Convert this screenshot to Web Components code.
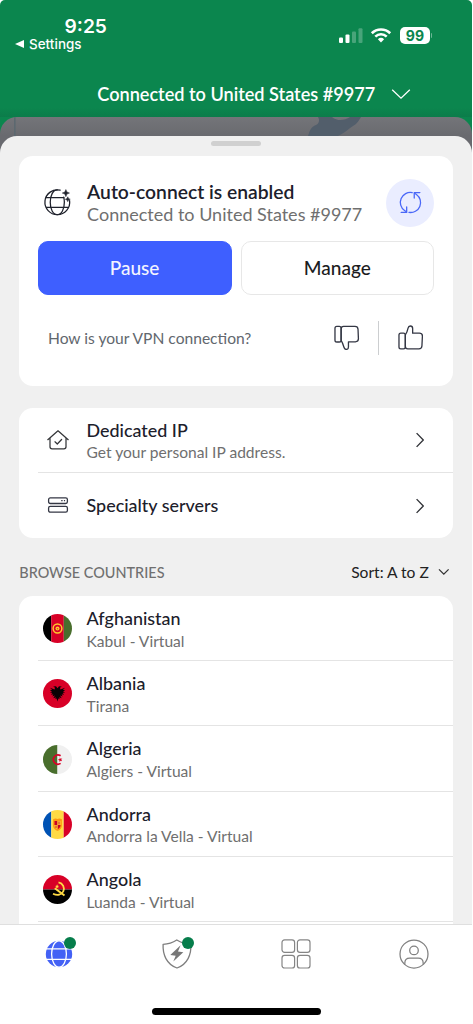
<!DOCTYPE html>
<html lang="en">
<head>
<meta charset="utf-8">
<title>VPN</title>
<style>
html,body{margin:0;height:100%;background:#fff;overflow:hidden}
body{font-family:Lato,"Open Sans",sans-serif;color:#1c1f2a}
</style>
</head>
<body>
<vpn-app></vpn-app>
<script>
const define = (name, html) => {
  const t = document.createElement('template');
  t.innerHTML = html;
  customElements.define(name, class extends HTMLElement {
    constructor() {
      super();
      this.attachShadow({mode: 'open'}).append(t.content.cloneNode(true));
    }
  });
};

const ICONS = {
  globeSpark: [30, 30, `<g fill="none" stroke="#1f222c" stroke-width="1.35" stroke-linecap="round"><path d="M18 2.3A13 13 0 1 0 27.9 13.2"/><path d="M15 2C10.4 2 7.6 8 7.6 15S10.4 28 15 28S22.4 22 22.4 15C22.4 13 22.2 11.3 21.8 9.7"/><path d="M3.5 10H21.8M3.5 20.3H26.5"/></g><path d="M24 1.6L25.1 4.2L27.8 5.3L25.1 6.4L24 9.1L22.9 6.4L20.2 5.3L22.9 4.2ZM26 9.2L26.8 11L28.6 11.8L26.8 12.6L26 14.4L25.2 12.6L23.4 11.8L25.2 11Z" fill="#1f222c" stroke="#1f222c" stroke-width=".5"/>`, 28.6],
  refresh: [24, 24, `<g fill="none" stroke="#4a68f8" stroke-width="1.35" stroke-linecap="round" stroke-linejoin="round"><path d="M13.8 1.7A10.4 10.4 0 0 0 5.8 20.4L7.6 21.7"/><path d="M10.4 22.3A10.4 10.4 0 0 0 18.2 3.6L16.4 2.3"/><path d="M21.8 1.6H15.9V7.3M2.3 22.4H8V16.7"/></g>`, 23],
  thumbUp: [26, 26, `<g fill="none" stroke="#343744" stroke-width="1.35" stroke-linejoin="round"><rect x="1" y="8.4" width="6.5" height="16" rx="1.9"/><path d="M7.5 10.2C8.8 8.3 9.8 5.4 10.3 3.1C10.6 1.7 11.2 1 12.6 1C14.2 1 15 2 15 3.6V8.4H21.9Q25 8.4 25 11.3L24.5 21.5Q24.3 24.4 21.4 24.4H10Q7.5 24.4 7.5 21.8Z"/></g>`, 25.4],
  thumbDown: [26, 26, `<g fill="none" stroke="#343744" stroke-width="1.35" stroke-linejoin="round"><rect x="1" y="1.4" width="6.3" height="16" rx="1.9"/><path d="M7.3 15.7C8.6 17.6 9.5 20.4 10.2 22.8C10.6 24.2 11.2 25 12.6 25C14.2 25 14.8 24 14.8 22.4V17.2H21.9Q25 17.2 25 14.2L24.6 4.3Q24.4 1.4 21.5 1.4H9.8Q7.3 1.4 7.3 4Z"/></g>`, 25.4],
  house: [24, 24, `<g fill="none" stroke="#343639" stroke-width="1.25" stroke-linecap="round" stroke-linejoin="round"><path d="M1.8 11.7L12 2.8L22.2 11.7M4 10V18.8Q4 20.9 6.1 20.9H17.9Q20 20.9 20 18.8V10"/><path d="M9 13.8L11.3 16L15.6 11.5"/></g>`],
  servers: [22, 18, `<g fill="none" stroke="#343744" stroke-width="1.3"><rect x="1.6" y="1.9" width="18.8" height="5.6" rx="1.7"/><rect x="1.6" y="10.4" width="18.8" height="5.8" rx="1.7"/><path d="M14.2 4.7H15.6M16.9 4.7H18.1"/></g>`],
  right: [10, 16, `<path d="M1.6 1.1L8.3 8L1.6 14.9" fill="none" stroke="#303237" stroke-width="1.35"/>`],
  down: [12, 8, `<path d="M1 1.4L5.8 6.1L10.6 1.4" fill="none" stroke="#333" stroke-width="1.3"/>`],
  downWide: [20, 12, `<path d="M1.2 1.7L10 10.1L18.8 1.7" fill="none" stroke="#fff" stroke-width="1.3"/>`],
  signal: [25, 17, `<g fill="#fff"><rect x="1" y="10.5" width="4" height="5.5" rx="1.1"/><rect x="7.5" y="7.5" width="4" height="8.5" rx="1.1"/><g opacity=".25"><rect x="14" y="4.5" width="4" height="11.5" rx="1.1"/><rect x="20.5" y="1.2" width="4" height="14.8" rx="1.1"/></g></g>`],
  wifi: [22, 16, `<g fill="none" stroke="#fff" stroke-width="2.6"><path d="M1.8 6.2A13.1 13.1 0 0 1 20.2 6.2"/><path d="M5.3 9.6A8.2 8.2 0 0 1 16.7 9.6"/></g><path d="M7.9 12.2A4.6 4.6 0 0 1 14.1 12.2L11 15.4Z" fill="#fff"/>`],
  globe: [28, 28, `<circle cx="14" cy="14" r="13.2" fill="#4361f5"/><g fill="none" stroke="#fff" stroke-width="1.3"><ellipse cx="14" cy="14" rx="7.4" ry="13.2"/><path d="M0 8.8H28M0 19.3H28"/></g>`],
  shield: [30, 30, `<path d="M14.8 1C11 3.6 6.3 5.2 1.1 5.3C.6 15.5 4.5 25.3 15 29C25.5 25.3 29.4 15.5 28.9 5.3C23.7 5.2 18.8 3.6 14.8 1Z" fill="none" stroke="#7e7e7e" stroke-width="1.3" stroke-linejoin="round"/><path d="M18.6 6.2L8.3 16L13.7 16.7L11.3 22.6L21.3 13.2L16 12.5Z" fill="#777"/>`],
  grid: [30, 30, `<g fill="none" stroke="#858585" stroke-width="1.2"><rect x="1" y=".8" width="12.6" height="12.6" rx="2.6"/><rect x="16.4" y=".8" width="12.6" height="12.6" rx="2.6"/><rect x="1" y="16.4" width="12.6" height="12.6" rx="2.6"/><rect x="16.4" y="16.4" width="12.6" height="12.6" rx="2.6"/></g>`],
  user: [30, 30, `<g fill="none" stroke="#808080" stroke-width="1.25"><circle cx="15" cy="15" r="14"/><circle cx="15" cy="11.4" r="4.3"/><path d="M5.8 25.4V24.2Q5.8 19.2 10.8 19.2H19.2Q24.2 19.2 24.2 24.2V25.4"/></g>`],
  af: [29, 29, `<path d="M0 0H8.2V29H0Z" fill="#000"/><path d="M8.2 0H20.8V29H8.2Z" fill="#d80027"/><path d="M20.8 0H29V29H20.8Z" fill="#496e2d"/><circle cx="14.5" cy="14.5" r="4.4" fill="none" stroke="#ffca2c" stroke-width="1.5"/><circle cx="14.5" cy="14.6" r="2" fill="#ffca2c"/><circle cx="14.5" cy="14.8" r=".8" fill="#d8501a"/>`],
  al: [29, 29, `<path d="M0 0H29V29H0Z" fill="#d80027"/><path d="M14.5 9.2L13 7.2L10.2 7.4L12 8.8L11.6 10.6L7 8.7L9.2 10.9L6.7 11L9 12.5L6.9 13.2L9.5 14.1L7.8 15.5L10.4 15.5L9.3 17.6L11.9 16.4L10.3 19.3L12.9 18.2L12.3 20.1L13.6 19.4L14.5 22.6L15.4 19.4L16.7 20.1L16.1 18.2L18.7 19.3L17.1 16.4L19.7 17.6L18.6 15.5L21.2 15.5L19.5 14.1L22.1 13.2L20 12.5L22.3 11L19.8 10.9L22 8.7L17.4 10.6L17 8.8L18.8 7.4L16 7.2Z" fill="#0b0205"/>`],
  dz: [29, 29, `<path d="M0 0H14.5V29H0Z" fill="#496e2d"/><path d="M14.5 0H29V29H14.5Z" fill="#f0f0f0"/><path d="M17.6 10.8A4.6 4.6 0 1 0 17.6 18.4" fill="none" stroke="#d80027" stroke-width="1.7"/><path d="M16.8 12.2L17.5 13.8L19.3 13.4L18.2 14.8L19.2 16.2L17.5 15.7L16.6 17.2L16.5 15.4L14.9 14.7L16.6 14.1Z" fill="#d80027"/>`],
  ad: [29, 29, `<path d="M0 0H8.3V29H0Z" fill="#0052b4"/><path d="M8.3 0H20.7V29H8.3Z" fill="#ffda44"/><path d="M20.7 0H29V29H20.7Z" fill="#d80027"/><path d="M10.1 9.3Q12.6 7.8 14.5 9Q16.4 7.8 18.9 9.3V15.8Q18.9 19 14.5 21Q10.1 19 10.1 15.8Z" fill="#ff9811"/><path d="M11.5 11H14.5V15H11.5ZM14.5 15H17.5Q17.5 18 14.5 19.2Z" fill="#c60024"/><path d="M14.5 11H17.5V15H14.5ZM11.5 15H14.5V19.2Q11.5 18 11.5 15Z" fill="#ffc63a"/><path d="M16 11.5V14.5M13 15.5V18" stroke="#c60024" stroke-width=".8"/>`],
  ao: [29, 29, `<path d="M0 0H29V14.5H0Z" fill="#d80027"/><path d="M0 14.5H29V29H0Z" fill="#000"/><path d="M15.5 7.4C20 8.3 22 12.8 20.2 16.5C18.7 19.8 14.5 20.8 10 18.7" fill="none" stroke="#ffda44" stroke-width="1.8"/><path d="M11.8 13.3L21.5 20.5" stroke="#ffda44" stroke-width="2"/><path d="M14.1 9.3L14.7 10.8L16.2 10.9L15 11.8L15.4 13.3L14.1 12.4L12.8 13.3L13.2 11.8L12 10.9L13.5 10.8Z" fill="#ffda44"/>`]
};

customElements.define('ui-icon', class extends HTMLElement {
  connectedCallback() {
    if (this.shadowRoot) return;
    const [w, h, body, size] = ICONS[this.getAttribute('name')];
    const dw = size || w, dh = size || h;
    this.attachShadow({mode: 'open'}).innerHTML =
      `<style>:host{display:block;flex:none;width:${dw}px;height:${dh}px}svg{display:block}</style>
       <svg width="${dw}" height="${dh}" viewBox="0 0 ${w} ${h}" aria-hidden="true">${body}</svg>`;
  }
});

define('status-bar', `<style>
:host{display:flex;justify-content:space-between;height:70px;color:#fff;font-family:Inter,sans-serif}
.left{padding:13.5px 0 0 15px}
.time{font-size:19.2px;font-weight:600;line-height:24px;padding-left:49.5px}
.back{display:flex;align-items:center;gap:5px;font-size:13.4px;font-weight:500;line-height:12px;letter-spacing:.05px}
.tri{width:0;height:0;border:4px solid transparent;border-right:9px solid #fff;border-left:0}
.right{display:flex;height:17px;align-items:center;padding:26.5px 40px 0 0}
.bat{width:30px;height:17px;border-radius:5px;background:#fff;color:#0b864e;font-size:14px;font-weight:700;line-height:17px;text-align:center;margin-left:8px}
.nub{width:1.5px;height:5px;background:#6db695;border-radius:0 2px 2px 0;margin-left:1px}
ui-icon+ui-icon{margin-left:7px}
</style>
<div class="left"><div class="time">9:25</div><div class="back"><i class="tri"></i><span>Settings</span></div></div>
<div class="right"><ui-icon name="signal"></ui-icon><ui-icon name="wifi"></ui-icon><div class="bat">99</div><i class="nub"></i></div>`);

define('connection-header', `<style>
:host{display:flex;height:47px;box-sizing:border-box;color:#fff;padding-left:97.3px;font-size:18.12px;font-weight:600;line-height:48px;
background:linear-gradient(#0b864e 80%,#0c7c4a)}
ui-icon{margin:18px 0 0 15.5px}
</style><span><slot></slot></span><ui-icon name="downWide"></ui-icon>`);

define('map-peek', `<style>
:host{display:block;height:40px;border-radius:17px 17px 0 0;background:linear-gradient(#747579,#696a6f 19px);overflow:hidden}
svg{display:block}
</style><svg width="472" height="40"><path d="M14.8 0V40" stroke="#5c6870" stroke-width="1.6"/><path d="M318 0C320 3 319 7 316 8C311 10 310 13 308 19L307 22H330C343 18 348 12 353 9C357 7 359 3 361 0H350C345 3 338 5 332 0Z" fill="#525e6b"/></svg>`);

define('bottom-sheet', `<style>
:host{display:block;box-sizing:border-box;height:788px;margin-top:-21px;background:#f0f0f0;border-radius:17px 17px 0 0;position:relative;padding:0 19px 0 19.3px;overflow:hidden}
.handle{width:50px;height:5px;border-radius:3px;background:#d0d0d0;margin:4.5px auto 10.5px}
</style><div class="handle"></div><slot></slot>`);

define('ui-card', `<style>
:host{display:block;background:#fff;border-radius:14px;overflow:hidden}
</style><slot></slot>`);

define('ui-button', `<style>
:host{display:flex;flex:1;box-sizing:border-box;height:54px;border-radius:10px;align-items:center;justify-content:center;font-size:19.05px;font-weight:500;border:1.5px solid #e7e7e7;color:#1c1c1e;padding:0 1px 1px 0}
:host([primary]){background:#3e5fff;border-color:#3e5fff;color:#f3f4ff}
</style><slot></slot>`);

define('auto-connect', `<style>
:host{display:block;height:229.5px;box-sizing:border-box;padding:22.5px 19px 0 19.2px}
.top{display:flex;height:48px}
ui-icon[name=globeSpark]{margin:9px 0 0 5px}
.txt{flex:1;padding:1.4px 0 0 15px}
b{display:block;font-size:19.28px;font-weight:600;line-height:23px;color:#1c202b}
.sub{display:block;font-size:18px;line-height:22px;color:#6f6f6f;white-space:nowrap}
.ring{width:48px;height:48px;border-radius:50%;background:#eaedff;display:grid;place-items:center}
.btns{display:flex;gap:9.5px;margin-top:14.5px}
.rate{display:flex;align-items:center;height:34px;margin-top:25.5px;padding:0 11.3px 0 9.5px;color:#62676e;font-size:15.6px}
.q{flex:1}
.line{width:1px;height:34px;background:#ccced0;margin:0 18.5px 0 18.5px}
</style>
<div class="top"><ui-icon name="globeSpark"></ui-icon><div class="txt"><b>Auto-connect is enabled</b><span class="sub">Connected to United States #9977</span></div><div class="ring"><ui-icon name="refresh"></ui-icon></div></div>
<div class="btns"><ui-button primary>Pause</ui-button><ui-button>Manage</ui-button></div>
<div class="rate"><span class="q">How is your VPN connection?</span><ui-icon name="thumbDown"></ui-icon><i class="line"></i><ui-icon name="thumbUp"></ui-icon></div>`);

define('list-row', `<style>
:host{display:flex;box-sizing:border-box;height:65.3px;margin-left:19.2px;border-bottom:1px solid #e4e4e4}
:host([last]){border-color:transparent}
.lead{width:38.4px;display:grid;place-items:center;padding-top:1px}
.txt{flex:1;padding:11px 0 0 9.7px}
.t{font-size:17.92px;font-weight:500;line-height:22.8px;color:#1c202b}
.s{font-size:15.58px;line-height:23.6px;color:#6f6f6f}
.end{padding:24.8px 28.4px 0 0}
:host([single]) .txt{padding-top:21.5px}
</style>
<div class="lead"><slot name="lead"></slot></div><div class="txt"><div class="t"><slot></slot></div><div class="s"><slot name="sub"></slot></div></div><div class="end"><slot name="end"></slot></div>`);

define('flag-badge', `<style>
:host{display:block;width:29px;height:29px;border-radius:50%;overflow:hidden}
</style><slot></slot>`);

define('list-heading', `<style>
:host{display:flex;justify-content:space-between;height:57.7px;line-height:69px;color:#707070;font-size:14.45px;font-weight:500}
.sort{display:flex;font-size:15.58px;line-height:68px;font-weight:400;color:#222;padding-right:3.6px}
ui-icon{margin:30px 0 0 9px}
</style><span><slot></slot></span><div class="sort"><slot name="sort"></slot><ui-icon name="down"></ui-icon></div>`);

define('tab-item', `<style>
:host{flex:1;display:flex;justify-content:center;padding-top:14px}
.box{position:relative;width:30px;height:30px;display:grid;place-items:center}
.dot{display:none;position:absolute;width:12px;height:12px;border-radius:50%;background:#067d4b;left:20px;top:-2px}
:host([dot]) .dot{display:block}
</style><div class="box"><slot></slot><i class="dot"></i></div>`);

define('tab-bar', `<style>
:host{display:block;height:100px;box-sizing:border-box;background:#fff;border-top:1px solid #dfdfdf}
nav{display:flex;height:83px;width:472.9px}
.home{width:169px;height:6.5px;border-radius:4px;background:#000;margin:0 auto}
</style><nav><slot></slot></nav><div class="home"></div>`);

const countries = [['af','Afghanistan','Kabul - Virtual'],['al','Albania','Tirana'],['dz','Algeria','Algiers - Virtual'],['ad','Andorra','Andorra la Vella - Virtual'],['ao','Angola','Luanda - Virtual']];

define('vpn-app', `<style>
:host{display:block;width:472.4px;height:1024px;overflow:hidden;background:#fff}
.hero{background:#0b864e;border-radius:5px 5px 0 0}
.gap{height:22px}
</style>
<div class="hero"><status-bar></status-bar><connection-header>Connected to United States #9977</connection-header><map-peek></map-peek></div>
<bottom-sheet>
<ui-card><auto-connect></auto-connect></ui-card>
<div class="gap"></div>
<ui-card>
<list-row><ui-icon slot="lead" name="house"></ui-icon>Dedicated IP<span slot="sub">Get your personal IP address.</span><ui-icon slot="end" name="right"></ui-icon></list-row>
<list-row single last><ui-icon slot="lead" name="servers"></ui-icon>Specialty servers<ui-icon slot="end" name="right"></ui-icon></list-row>
</ui-card>
<list-heading>BROWSE COUNTRIES<span slot="sort">Sort: A to Z</span></list-heading>
<ui-card>
${countries.map(([c, n, s]) => `<list-row><flag-badge slot="lead"><ui-icon name="${c}"></ui-icon></flag-badge>${n}<span slot="sub">${s}</span></list-row>`).join('')}
<list-row></list-row>
</ui-card>
</bottom-sheet>
<tab-bar>
<tab-item dot><ui-icon name="globe"></ui-icon></tab-item>
<tab-item dot><ui-icon name="shield"></ui-icon></tab-item>
<tab-item><ui-icon name="grid"></ui-icon></tab-item>
<tab-item><ui-icon name="user"></ui-icon></tab-item>
</tab-bar>`);
</script>
</body>
</html>
